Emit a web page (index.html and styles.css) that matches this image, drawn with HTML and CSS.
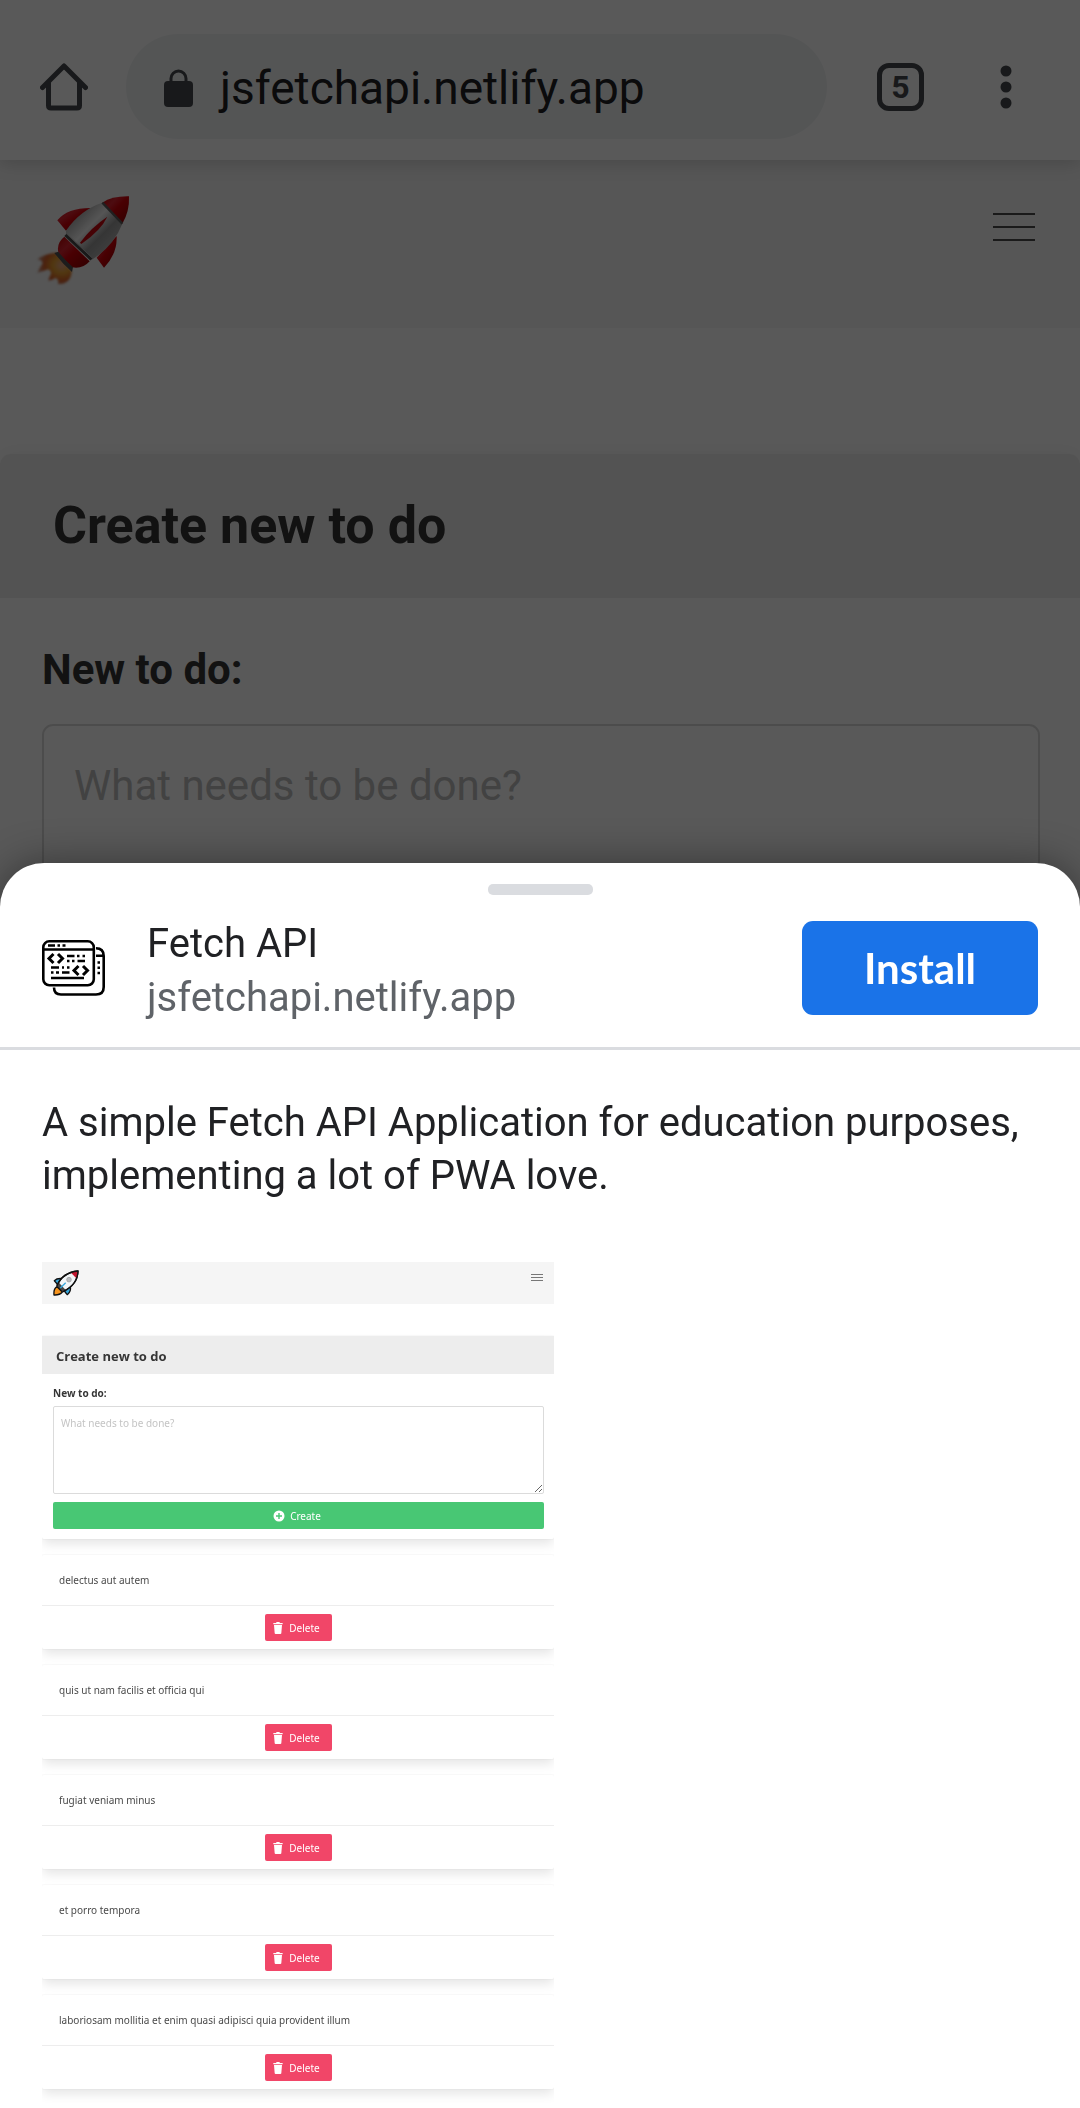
FILE: index.html
```html
<!DOCTYPE html>
<html lang="en">
<head>
<meta charset="utf-8">
<meta name="viewport" content="width=device-width, initial-scale=1">
<title>Fetch API</title>
<link rel="stylesheet" href="styles.css">
</head>
<body>
<svg class="defs" aria-hidden="true">
  <symbol id="trash" viewBox="0 0 30 36">
    <path d="M1 3h8l2-3h8l2 3h8v4H1zM3 9h24l-2 24q0 3-3 3H8q-3 0-3-3z" fill="#fff"/>
  </symbol>
</svg>

<header class="toolbar">
  <button class="icon-button" aria-label="Home">
    <svg width="48" height="48" viewBox="0 0 48 48" fill="none" stroke="#46494d" stroke-width="5" stroke-linejoin="round" stroke-linecap="round"><path d="M2.500 24.500L24 3L45.500 24.500M8.500 19V42.500Q8.500 45 11 45H37Q39.500 45 39.500 42.500V19"/></svg>
  </button>
  <div class="address">
    <svg width="29" height="38" viewBox="0 0 29 38"><path d="M7 14V9.500a7.500 7.500 0 0 1 15 0V14" fill="none" stroke="#46494d" stroke-width="3"/><rect y="12" width="29" height="26" rx="4" fill="#46494d"/></svg>
    <span>jsfetchapi.netlify.app</span>
  </div>
  <button class="tabs" aria-label="Open tabs">5</button>
  <button class="icon-button" aria-label="Menu">
    <svg width="12" height="44" viewBox="0 0 12 44" fill="#46494d"><circle cx="6" cy="6" r="5.500"/><circle cx="6" cy="22" r="5.500"/><circle cx="6" cy="38" r="5.500"/></svg>
  </button>
</header>

<nav class="navbar">
  <a href="#" aria-label="Home page">
    <svg width="110" height="110" viewBox="0 0 330 330">
      <defs>
        <linearGradient id="hull" x1="0" y1="0" x2="1" y2="1"><stop offset=".2" stop-color="#aaa"/><stop offset=".42" stop-color="#f4f4f4"/><stop offset=".6" stop-color="#999"/><stop offset=".85" stop-color="#bbb"/></linearGradient>
        <linearGradient id="red" x1="0" y1="0" x2="1" y2="1"><stop offset="0" stop-color="#b00"/><stop offset=".3" stop-color="#dc2430"/><stop offset=".5" stop-color="#d00008"/><stop offset="1" stop-color="#8c0000"/></linearGradient>
        <radialGradient id="fire" cx=".7" cy=".4" r=".7"><stop offset="0" stop-color="#e8a890"/><stop offset=".35" stop-color="#e8a030"/><stop offset=".7" stop-color="#d86028"/><stop offset="1" stop-color="#a04020" stop-opacity=".5"/></radialGradient>
        <filter id="soft"><feGaussianBlur stdDeviation="3"/></filter>
      </defs>
      <path d="M78 218Q45 220 22 238Q36 240 38 250Q28 265 22 278Q42 274 54 268Q66 274 62 284Q54 298 56 302Q68 300 76 294Q88 298 84 312Q112 314 122 290L126 274Z" fill="url(#fire)" filter="url(#soft)"/>
      <path d="M82 121Q112 84 182 84L108 152Z" fill="url(#red)"/>
      <path d="M200 233L260 168Q262 222 222 263Z" fill="url(#red)"/>
      <path d="M108 152Q150 90 217 68L277 131Q250 200 184 240L108 166Z" fill="url(#hull)"/>
      <path d="M217 68Q246 48 297 49Q299 94 277 131Z" fill="url(#red)"/>
      <path d="M217 68L277 131" stroke="#5c5c5c" stroke-width="7"/>
      <path d="M103 170Q77 190 86 222L126 262Q158 268 179 244Z" fill="url(#red)"/>
      <path d="M106 165L184 238" stroke="#484848" stroke-width="9"/>
      <path d="M110 161L187 234" stroke="#b4b4b4" stroke-width="3"/>
      <path d="M73 219L85 215Q104 240 129 262L126 276Q98 252 73 219Z" fill="#505050"/>
      <path d="M150 188Q184 142 232 110Q213 151 154 192Z" fill="#c80810"/>
    </svg>
  </a>
  <button class="burger" aria-label="Toggle navigation"><span></span><span></span><span></span></button>
</nav>

<main class="page-card">
  <h1>Create new to do</h1>
  <form>
    <label for="todo">New to do:</label>
    <textarea id="todo" rows="4" placeholder="What needs to be done?"></textarea>
  </form>
</main>

<div class="scrim"></div>

<section class="sheet" role="dialog" aria-label="Install app">
  <div class="handle"></div>
  <header class="app">
    <svg width="63" height="56" viewBox="0 0 63 56" fill="none" stroke="#000" stroke-width="2.600">
      <rect x="1.300" y="1.300" width="50.500" height="44" rx="6"/>
      <path d="M1 9.500H52M6 5.500H13M15.500 5.500H18M20.500 5.500H23.500"/>
      <path d="M11.500 14L7 18.500L11.500 23M16 14L20.500 18.500L16 23M36.500 26L32 30.500L36.500 35M41 26L45.500 30.500L41 35" stroke-width="3"/>
      <path d="M25 16H32.500M35 16H37.500M40.500 16H43M25 21H27.500M30 21H32.500M35.500 21H43M9 27.500H17M20 27.500H22M25 27.500H27.500M9 32.500H11.500M14 32.500H17M20 32.500H27.500M9 38H42"/>
      <path d="M54 8.200Q61.700 8.200 61.700 16V47Q61.700 54.500 54 54.500H19Q12 54.500 12 47.500M54 15.800H62M55.500 22.500H58M55.500 27.800H58M55.500 33H58"/>
    </svg>
    <div class="app-text">
      <h2>Fetch API</h2>
      <p>jsfetchapi.netlify.app</p>
    </div>
    <button class="install">Install</button>
  </header>
  <p class="about">A simple Fetch API Application for education purposes, implementing a lot of PWA love.</p>

  <div class="preview">
    <nav class="mini-nav">
      <a href="#" aria-label="Home page">
        <svg width="26" height="26" viewBox="0 0 78 78" stroke="#111" stroke-width="4" stroke-linejoin="round">
          <path d="M28 26Q12 24 4 32Q12 40 14 46M52 49Q55 64 43 74Q38 70 34 62" fill="#35a7dc"/>
          <path d="M12 50Q1 56 3 75Q20 76 28 66Z" fill="#f7941d"/>
          <path d="M12 47Q28 8 75 3Q74 44 30 65Z" fill="#f2f5f7"/>
          <path d="M54 8Q64 3 75 3Q75 14 70 25Z" fill="#c3162f" stroke="none"/>
          <path d="M12 47L30 65L38 60L18 38Z" fill="#444" stroke="none"/>
          <circle cx="48" cy="29" r="7" fill="#b8bcc0" stroke="#999" stroke-width="2"/>
          <path d="M22 54L38 38" stroke="#35a7dc" stroke-width="4"/>
          <path d="M12 47Q28 8 75 3Q74 44 30 65" fill="none"/>
        </svg>
      </a>
      <button class="mini-burger" aria-label="Toggle navigation"><span></span><span></span><span></span></button>
    </nav>
    <section class="mini-card mini-create">
      <h3>Create new to do</h3>
      <form>
        <label for="mini-todo">New to do:</label>
        <textarea id="mini-todo" placeholder="What needs to be done?"></textarea>
        <button type="button" class="create"><svg width="12" height="12" viewBox="0 0 12 12"><circle cx="6" cy="6" r="5.500" fill="#fff"/><path d="M6 3V9M3 6H9" stroke="#48c774" stroke-width="1.400"/></svg>Create</button>
      </form>
    </section>
    <article class="mini-card"><p>delectus aut autem</p><footer><button class="delete"><svg width="10" height="12"><use href="#trash"/></svg>Delete</button></footer></article>
    <article class="mini-card"><p>quis ut nam facilis et officia qui</p><footer><button class="delete"><svg width="10" height="12"><use href="#trash"/></svg>Delete</button></footer></article>
    <article class="mini-card"><p>fugiat veniam minus</p><footer><button class="delete"><svg width="10" height="12"><use href="#trash"/></svg>Delete</button></footer></article>
    <article class="mini-card"><p>et porro tempora</p><footer><button class="delete"><svg width="10" height="12"><use href="#trash"/></svg>Delete</button></footer></article>
    <article class="mini-card"><p>laboriosam mollitia et enim quasi adipisci quia provident illum</p><footer><button class="delete"><svg width="10" height="12"><use href="#trash"/></svg>Delete</button></footer></article>
  </div>
</section>
</body>
</html>
```
FILE: styles.css
```css
* { box-sizing: border-box; }

body {
  margin: 0;
  min-height: 100vh;
  background: #fff;
  color: #363636;
  font-family: Roboto, "Liberation Sans", sans-serif;
  font-size: 42px;
}

h1, h2, h3, p { margin: 0; font-size: inherit; font-weight: 400; }
svg { display: block; flex: none; }
button { border: 0; padding: 0; margin: 0; background: none; font: inherit; color: inherit; }
textarea { display: block; width: 100%; margin: 0; font: inherit; background: #fff; }
.defs { position: absolute; width: 0; height: 0; }

/* Browser bar */
.toolbar {
  position: relative;
  display: flex;
  align-items: center;
  padding: 34px 68px 21px 40px;
  background: #fff;
  box-shadow: 0 2px 18px rgba(0, 0, 0, .18);
}
.address {
  flex: 1;
  display: flex;
  align-items: center;
  gap: 27px;
  height: 105px;
  margin: 0 50px 0 38px;
  padding: 2px 38px 0;
  border-radius: 53px;
  background: #f1f3f4;
  color: #202124;
  font-size: 46px;
}
.tabs {
  width: 47px;
  height: 48px;
  margin-right: 76px;
  border: 5px solid #46494d;
  border-radius: 12px;
  color: #46494d;
  font-size: 32px;
  font-weight: 700;
  line-height: 36px;
}

/* Page behind the sheet */
.navbar {
  display: flex;
  justify-content: space-between;
  align-items: flex-start;
  padding: 20px 45px 38px 30px;
  background: #f5f5f5;
}
.burger { display: grid; gap: 11px; width: 42px; margin-top: 33px; }
.burger span { height: 2px; background: #4a4a4a; }

.page-card {
  margin-top: 126px;
  border-radius: 11px 11px 0 0;
  box-shadow: 0 0 20px rgba(10, 10, 10, .05);
}
.page-card h1 {
  padding: 40px 53px;
  border-radius: 11px 11px 0 0;
  background: #ededed;
  font-size: 52px;
  font-weight: 700;
  line-height: 64px;
}
.page-card form { padding: 40px 40px 40px 42px; }
.page-card label { display: block; margin-bottom: 22px; font-weight: 700; line-height: 64px; }
.page-card textarea {
  padding: 28px 30px;
  border: 2px solid #dbdbdb;
  border-radius: 11px;
  line-height: 64px;
  resize: none;
}
.page-card textarea::placeholder { color: #bcbcbc; }

.scrim { position: fixed; inset: 0; background: rgba(0, 0, 0, .65); }

/* Install sheet */
.sheet {
  position: fixed;
  left: 0;
  right: 0;
  bottom: 0;
  max-height: 100vh;
  padding-top: 21px;
  overflow-y: auto;
  border-radius: 44px 44px 0 0;
  background: #fff;
  box-shadow: 0 0 40px rgba(0, 0, 0, .4);
  color: #202124;
}
.handle { width: 105px; height: 11px; margin: 0 auto; border-radius: 5px; background: #dadce0; }
.app {
  display: flex;
  align-items: center;
  padding: 16px 42px 22px;
  border-bottom: 3px solid #dadce0;
}
.app-text { flex: 1; margin-left: 42px; padding-top: 6px; line-height: 54px; font-size: 40px; }
.app-text p { color: #5f6368; }
.install {
  width: 236px;
  height: 94px;
  border-radius: 11px;
  background: #1a73e8;
  color: #fff;
  font-family: Lato, "Liberation Sans", sans-serif;
  font-weight: 700;
}
.about { padding: 46px 42px 60px; font-size: 40px; line-height: 53px; }

/* App preview */
.preview {
  width: 512px;
  max-width: 100%;
  margin-left: 42px;
  padding-bottom: 3px;
  overflow: hidden;
  color: #4a4a4a;
  font-family: "Noto Sans", "Open Sans", sans-serif;
  font-size: 10px;
  line-height: 16px;
}
.mini-nav {
  display: flex;
  justify-content: space-between;
  align-items: flex-start;
  padding: 8px 11px;
  margin-bottom: 32px;
  background: #f5f5f5;
}
.mini-burger { display: grid; gap: 2px; width: 12px; margin-top: 4px; }
.mini-burger span { height: 1px; background: #777; }
.mini-card {
  margin-bottom: 16px;
  border-radius: 2px;
  background: #fff;
  box-shadow: 0 6px 11px -1px rgba(10, 10, 10, .1), 0 0 0 1px rgba(10, 10, 10, .02);
}
.mini-card h3 {
  padding: 12px 14px 10px;
  background: #ededed;
  color: #363636;
  font-family: "Open Sans", "Noto Sans", sans-serif;
  font-size: 13px;
  font-weight: 700;
}
.mini-create form { padding: 11px 10px 10px 11px; }
.mini-create label { display: block; margin-bottom: 5px; color: #363636; font-weight: 700; }
.mini-create textarea {
  height: 88px;
  margin-bottom: 8px;
  padding: 8px 7px;
  border: 1px solid #dbdbdb;
  border-radius: 2px;
}
.mini-create textarea::placeholder { color: #c4c4c4; }
.create, .delete {
  display: flex;
  align-items: center;
  justify-content: center;
  height: 27px;
  border-radius: 2px;
  color: #fff;
}
.create { width: 100%; gap: 5px; padding-right: 3px; background: #48c774; }
.delete { width: 67px; gap: 6px; padding-right: 3px; background: #f14668; }
.mini-card > p { padding: 17px; }
.mini-card footer { display: flex; justify-content: center; padding: 8px; border-top: 1px solid #ededed; }
```
